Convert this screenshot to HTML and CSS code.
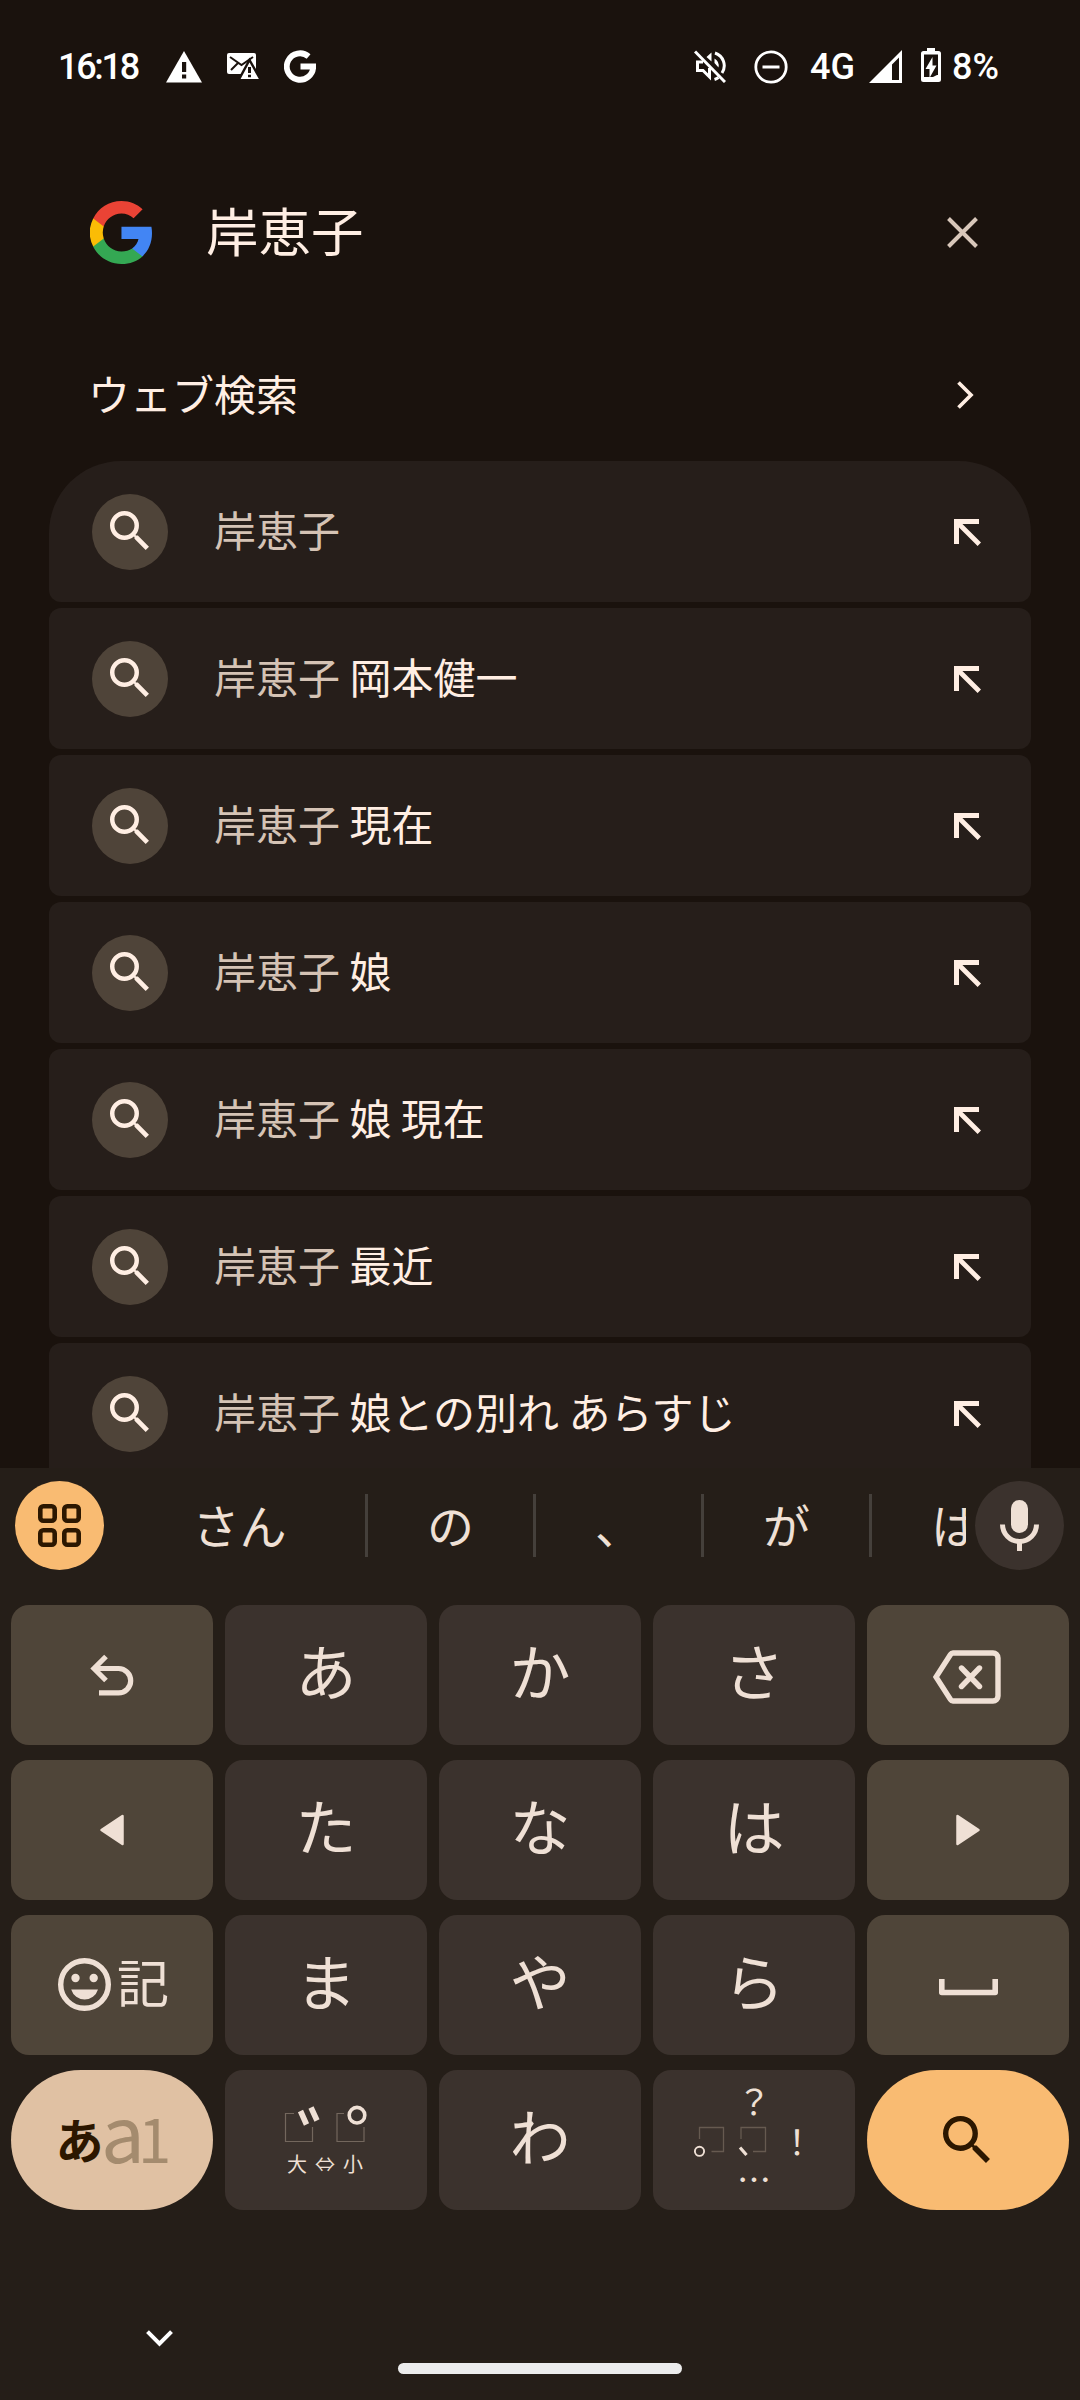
FILE: index.html
```html
<!DOCTYPE html>
<html lang="ja">
<head>
<meta charset="utf-8">
<title>岸恵子</title>
<link rel="stylesheet" href="styles.css">
</head>
<body>
<svg class="defs" width="0" height="0">
  <symbol id="search" viewBox="3 3 17.5 17.5"><path d="M15.5 14h-.79l-.28-.27A6.471 6.471 0 0 0 16 9.500 6.500 6.500 0 1 0 9.500 16c1.610 0 3.090-.59 4.230-1.570l.27.28v.79l5 4.990L20.490 19l-4.990-5zm-6 0C7.010 14 5 11.990 5 9.500S7.010 5 9.500 5 14 7.010 14 9.500 11.990 14 9.500 14z"/></symbol>
  <symbol id="insert" viewBox="0 0 27 27"><path d="M0 0H25V5H8.400L27 23.600 23.600 27 5 8.400V25H0z"/></symbol>
</svg>
<div class="screen">
  <header class="status">
    <span class="clock">16:18</span>
    <svg class="s-warn" width="36" height="32" viewBox="0 0 36 32"><path fill="#fff" d="M18 0 36 31.500H0z"/><path fill="#1a120d" d="M16 11h4.200v10H16zM16 23.500h4.200V27.500H16z"/></svg>
    <svg class="s-mail" width="32" height="27" viewBox="0 0 32 27"><rect width="29" height="21" rx="2" fill="#fff"/><path d="M3 4l11.500 8L26 4M4 17l7-7" fill="none" stroke="#1a120d" stroke-width="2"/><path fill="#fff" stroke="#1a120d" stroke-width="2.400" d="M22.500 7 34 27.300H11.500z"/><path fill="#1a120d" d="M21 14h3v6h-3zM21 21.700h3v2.500h-3z"/></svg>
    <svg class="s-g" width="32" height="33" viewBox="0 0 32 33"><path d="M24.600 6.500A13.200 13.200 0 1 0 29.200 16.500H16.500" fill="none" stroke="#fff" stroke-width="5.800"/></svg>
    <span class="grow"></span>
    <svg class="s-mute" width="32" height="33" viewBox="0 0 32 33"><g fill="none" stroke="#fff" stroke-width="3"><path d="M1 1.500 31 32"/><path d="M9 12H3.500v8.500H9l6.500 6.500V18"/><path d="M21 3a13.300 13.300 0 0 1 7 20M20.500 29.500a14 14 0 0 0 4-2"/></g><path fill="#fff" d="M12.500 7 17.500 2.500V11.500zM20.500 8.500a8.500 8.500 0 0 1 4 9l-4-4.500z"/></svg>
    <svg class="s-dnd" width="34" height="34" viewBox="0 0 34 34"><circle cx="17" cy="17" r="15.200" fill="none" stroke="#fff" stroke-width="2.800"/><path d="M8.500 17h17" stroke="#fff" stroke-width="3"/></svg>
    <span class="net">4G</span>
    <svg class="s-sig" width="33" height="33" viewBox="0 0 33 33"><path fill="#fff" fill-rule="evenodd" d="M33 0V33H0zM30 7.500 23 14.500V30h7z"/></svg>
    <svg class="s-bat" width="20" height="34" viewBox="0 0 20 34"><path fill="#fff" fill-rule="evenodd" d="M6 0h8v3h3.500A2.500 2.500 0 0 1 20 5.500v26a2.500 2.500 0 0 1-2.500 2.500h-15A2.500 2.500 0 0 1 0 31.500v-26A2.500 2.500 0 0 1 2.500 3H6zM3 6.500V29h14V6.500z"/><path fill="#fff" d="M11.500 9v8.500h4L8.500 30v-9h-4zM3 29h3l2 2 8-4h2v5H3z"/></svg>
    <span class="pct">8%</span>
  </header>

  <div class="query">
    <svg class="glogo" width="62" height="63" viewBox="3.060 1 21.560 22" preserveAspectRatio="none"><path fill="#4285F4" d="M24.620 12.250c0-.78-.07-1.530-.2-2.250H14v4.260h5.920c-.26 1.370-1.040 2.530-2.210 3.310v2.770h3.570c2.080-1.920 3.340-4.740 3.340-8.090z"/><path fill="#34A853" d="M14 23c2.970 0 5.460-.98 7.280-2.660l-3.570-2.770c-.98.66-2.230 1.060-3.710 1.060-2.860 0-5.290-1.930-6.160-4.530H4.180v2.840C5.990 20.530 9.700 23 14 23z"/><path fill="#FBBC05" d="M7.840 14.090a6.600 6.600 0 0 1 0-4.180V7.070H4.180a11 11 0 0 0 0 9.860l3.660-2.840z"/><path fill="#EA4335" d="M14 5.380c1.620 0 3.060.56 4.210 1.640l3.150-3.150C19.450 2.090 16.970 1 14 1 9.700 1 5.990 3.470 4.180 7.070l3.660 2.840c.87-2.600 3.300-4.530 6.160-4.530z"/></svg>
    <span class="qtext">岸恵子</span>
    <svg class="clear" width="31" height="31" viewBox="0 0 31 31"><path d="M1.500 1.500 29.500 29.500M29.500 1.500 1.500 29.500" stroke="#d8c7ba" stroke-width="4"/></svg>
  </div>

  <div class="section"><span>ウェブ検索</span><svg width="17" height="28" viewBox="0 0 17 28"><path d="M1.500 1.500 14 14 1.500 26.500" fill="none" stroke="#ffeee3" stroke-width="3.700"/></svg></div>

  <main class="list">
    <div class="row"><i class="dot"><svg><use href="#search"/></svg></i><p>岸恵子</p><svg class="ins"><use href="#insert"/></svg></div>
    <div class="row"><i class="dot"><svg><use href="#search"/></svg></i><p>岸恵子 <b>岡本健一</b></p><svg class="ins"><use href="#insert"/></svg></div>
    <div class="row"><i class="dot"><svg><use href="#search"/></svg></i><p>岸恵子 <b>現在</b></p><svg class="ins"><use href="#insert"/></svg></div>
    <div class="row"><i class="dot"><svg><use href="#search"/></svg></i><p>岸恵子 <b>娘</b></p><svg class="ins"><use href="#insert"/></svg></div>
    <div class="row"><i class="dot"><svg><use href="#search"/></svg></i><p>岸恵子 <b>娘 現在</b></p><svg class="ins"><use href="#insert"/></svg></div>
    <div class="row"><i class="dot"><svg><use href="#search"/></svg></i><p>岸恵子 <b>最近</b></p><svg class="ins"><use href="#insert"/></svg></div>
    <div class="row"><i class="dot"><svg><use href="#search"/></svg></i><p>岸恵子 <b>娘との別れ あらすじ</b></p><svg class="ins"><use href="#insert"/></svg></div>
  </main>

  <section class="keyboard">
    <div class="strip">
      <span class="round apps"><svg width="43" height="43" viewBox="0 0 43 43"><g fill="none" stroke="#2c1700" stroke-width="4.600"><rect x="2.300" y="2.300" width="14.400" height="14.400" rx="3"/><rect x="26.300" y="2.300" width="14.400" height="14.400" rx="3"/><rect x="2.300" y="26.300" width="14.400" height="14.400" rx="3"/><rect x="26.300" y="26.300" width="14.400" height="14.400" rx="3"/></g></svg></span>
      <div class="cands"><span class="wide">さん</span><span>の</span><span>、</span><span>が</span><span>は</span></div>
      <span class="round mic"><svg width="39" height="51" viewBox="0 0 39 51"><rect x="11" width="17" height="33" rx="8.500" fill="#efe0d5"/><path d="M2.500 24.500a17 17 0 0 0 34 0M19.500 41v10" fill="none" stroke="#efe0d5" stroke-width="5"/></svg></span>
    </div>
    <div class="keys">
      <div class="key mod"><svg width="44" height="42" viewBox="0 0 44 42"><path d="M16 2.500 4 14.500 16 26.500M4 14.500H28.500a12.200 12.200 0 0 1 0 24.400H9" fill="none" stroke="#efe0d5" stroke-width="5.200"/></svg></div>
      <div class="key">あ</div><div class="key">か</div><div class="key">さ</div>
      <div class="key mod"><svg class="bksp" width="68" height="54" viewBox="0 0 68 54"><path d="M20 3H60a5 5 0 0 1 5 5V46a5 5 0 0 1-5 5H20q-1.500 0-2.500-1.500L3 27 17.500 4.500Q18.500 3 20 3z" fill="none" stroke="#efe0d5" stroke-width="5.400"/><path d="M28.500 18 46.500 36.500M46.500 18 28.500 36.500" stroke="#efe0d5" stroke-width="5.400" stroke-linecap="round"/></svg></div>

      <div class="key mod"><svg width="26" height="32" viewBox="0 0 26 32"><path d="M2.500 16 23.500 2V30z" fill="#efe0d5" stroke="#efe0d5" stroke-width="2.500" stroke-linejoin="round"/></svg></div>
      <div class="key">た</div><div class="key">な</div><div class="key">は</div>
      <div class="key mod"><svg width="26" height="32" viewBox="0 0 26 32"><path d="M23.500 16 2.500 2V30z" fill="#efe0d5" stroke="#efe0d5" stroke-width="2.500" stroke-linejoin="round"/></svg></div>

      <div class="key mod emoji"><svg width="53" height="53" viewBox="0 0 53 53"><circle cx="26.500" cy="26.500" r="23.800" fill="none" stroke="#efe0d5" stroke-width="5.400"/><g fill="#efe0d5"><circle cx="17.500" cy="20" r="4.200"/><circle cx="35.700" cy="20" r="4.200"/><path d="M13.200 31.500H40a14 14 0 0 1-26.800 0z"/></g></svg><span>記</span></div>
      <div class="key">ま</div><div class="key">や</div><div class="key">ら</div>
      <div class="key mod"><svg class="space" width="59" height="17" viewBox="0 0 59 17"><path d="M2.800 0V13.500H56.200V0" fill="none" stroke="#efe0d5" stroke-width="5.600" stroke-linejoin="round"/></svg></div>

      <div class="key lang"><svg width="202" height="140" viewBox="0 0 202 140"><text class="l1" x="44.500" y="88.500">あ</text><text class="l2" x="90" y="93">a</text><text class="l3" x="127" y="93">1</text></svg></div>
      <div class="key"><svg width="202" height="140" viewBox="0 0 202 140"><path d="M69 43.500H60.500V71.500H87.500V57M119 43.500H112V71.500H139V57" fill="none" stroke="#73675d" stroke-width="1.200"/><path d="M75.500 41 81.500 54.500M86 37.500 92 50.500" stroke="#efe0d5" stroke-width="5.600"/><circle cx="132" cy="45.200" r="7.800" fill="none" stroke="#efe0d5" stroke-width="3.600"/><text class="tiny" x="72" y="102">大</text><text class="tiny" x="100" y="102">⇔</text><text class="tiny" x="128" y="102">小</text></svg></div>
      <div class="key">わ</div>
      <div class="key"><svg width="202" height="140" viewBox="0 0 202 140"><path d="M46.500 69V57.500H70.500V81.500H58.500M88 69V57.500H112.500V81.500H100" fill="none" stroke="#665a50" stroke-width="1.300"/><circle cx="46.500" cy="81.300" r="4.600" fill="none" stroke="#efe0d5" stroke-width="1.900"/><path d="M87 77.500 93.500 85" stroke="#efe0d5" stroke-width="3.200"/><text class="punct" x="101" y="45">？</text><text class="punct" x="144" y="85">！</text><text class="punct" x="101" y="123">…</text></svg></div>
      <div class="key enter"><svg width="47" height="47"><use href="#search"/></svg></div>
    </div>
    <footer class="nav">
      <svg width="27" height="17" viewBox="0 0 27 17"><path d="M1.500 1.700 13.500 13.700 25.500 1.700" fill="none" stroke="#fff" stroke-width="4"/></svg>
      <div class="pill"></div>
    </footer>
  </section>
</div>
</body>
</html>
```
FILE: styles.css
```css
* { box-sizing: border-box; }
body { margin: 0; background: #1a120d; font-family: "Noto Sans CJK JP", sans-serif; }
svg { display: block; flex: none; }
.defs { position: absolute; }
.screen { width: 1080px; height: 2400px; overflow: hidden; display: flex; flex-direction: column; }

.status { height: 133px; flex: none; display: flex; align-items: center; padding: 0 76px 0 58px; color: #fff; font: 500 36px/40px Roboto, sans-serif; }
.clock { width: 108px; letter-spacing: -2.3px; white-space: nowrap; }
.s-mail { margin-left: 25px; }
.s-g { margin-left: 25px; }
.grow { flex: 1; }
.s-dnd { margin-left: 28px; }
.net { width: 50px; margin-left: 22px; }
.s-sig { margin-left: 9px; }
.s-bat { margin: 0 11px 3px 19px; }
.pct { width: 52px; white-space: nowrap; }

.query { height: 198px; flex: none; display: flex; align-items: center; padding: 0 102px 0 90px; }
.qtext { flex: 1; margin-left: 54px; padding-bottom: 6px; font-size: 52.5px; line-height: 76px; color: #ffeee3; }
.section { height: 130px; flex: none; display: flex; justify-content: space-between; align-items: center; padding: 0 106px 2px 88px; font-size: 42px; line-height: 60px; color: #ffeee3; }
.section span { padding-bottom: 4px; }

.list { height: 1007px; flex: none; overflow: hidden; display: flex; flex-direction: column; gap: 6px; padding: 0 49px; }
.row { height: 141px; flex: none; display: flex; align-items: center; padding: 0 50px 0 43px; background: #261e1a; border-radius: 12px; }
.row:first-child { border-radius: 72px 72px 12px 12px; }
.dot { width: 76px; height: 76px; border-radius: 50%; background: #4f4439; display: flex; align-items: center; justify-content: center; }
.dot svg { width: 39px; height: 39px; margin: 0 1px 2px 0; fill: #ffeee3; }
.row p { flex: 1; margin: 0 0 0 46px; padding-bottom: 6px; font-size: 42px; line-height: 60px; color: #d5c3b5; white-space: nowrap; }
.row b { font-weight: 400; color: #ffeee3; }
.ins { width: 27px; height: 27px; margin-top: 2px; fill: #ffeee3; }

.keyboard { height: 932px; flex: none; background: #251e18; color: #efe0d5; }
.strip { height: 137px; display: flex; padding: 13px 16px 0 15px; }
.round { width: 89px; height: 89px; flex: none; border-radius: 50%; display: flex; align-items: center; justify-content: center; }
.apps { background: #f9bb72; }
.mic { background: #3b322d; margin-left: 9px; }
.cands { flex: 1; height: 89px; overflow: hidden; display: flex; align-items: center; padding-left: 10px; font-size: 47px; line-height: 60px; }
.cands span { width: 168px; height: 63px; flex: none; text-align: center; border-right: 3px solid #45403b; }
.cands .wide { width: 254px; }

.keys { display: grid; grid-template-columns: repeat(5, 202px); grid-auto-rows: 140px; gap: 15px 12px; padding-left: 11px; }
.key { display: flex; align-items: center; justify-content: center; border-radius: 18px; background: #3b322d; font-size: 61px; line-height: 84px; padding-bottom: 10px; }
.key > svg { margin-bottom: -10px; }
.key.mod { background: #4f4539; }
.key .bksp { margin: 0 2px -14px 0; }
.key .space { margin-bottom: -14px; }
.key.emoji { gap: 6px; padding: 0 0 8px 3px; font-size: 52px; }
.key.emoji svg { margin-bottom: -6px; }
.key.lang { border-radius: 70px; background: #e0c1a3; }
.key.enter { border-radius: 70px; background: #f9bb72; }
.enter svg { margin-right: 4px; fill: #2c1700; }
.key.enter svg { margin-bottom: -8px; }
.l1 { font-size: 48px; font-weight: 700; fill: #2c1700; }
.l2, .l3 { fill: #a48b6e; }
.l2 { font-size: 78px; }
.l3 { font-size: 60px; }
.tiny { font-size: 20px; fill: #efe0d5; text-anchor: middle; }
.punct { font-size: 34px; fill: #efe0d5; text-anchor: middle; }

.nav { padding: 120px 0 0; }
.nav svg { margin-left: 146px; }
.pill { width: 284px; height: 11px; margin: 16px auto 0; border-radius: 6px; background: #ececec; }
```
